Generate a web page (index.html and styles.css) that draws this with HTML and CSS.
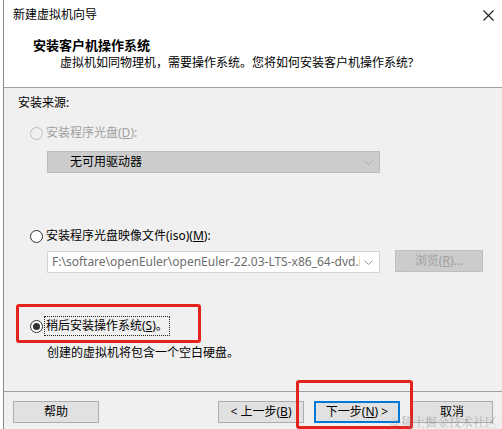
FILE: index.html
```html
<!DOCTYPE html>
<html lang="zh-CN">
<head>
<meta charset="utf-8">
<title>新建虚拟机向导</title>
<link rel="stylesheet" href="styles.css">
</head>
<body>
<div class="win">
  <div class="header">
    <div class="titlebar">
      <span class="title">新建虚拟机向导</span>
      <svg class="close" width="11" height="11" viewBox="0 0 11 11"><path d="M0.5 0.5 L10.5 10.5 M10.5 0.5 L0.5 10.5" stroke="#1a1a1a" stroke-width="1.1" fill="none"/></svg>
    </div>
    <div class="heading">安装客户机操作系统</div>
    <div class="sub">虚拟机如同物理机，需要操作系统。您将如何安装客户机操作系统?</div>
  </div>
  <div class="content">
    <div class="label">安装来源:</div>
    <div class="opt opt-disc disabled">
      <span class="radio"></span>
      <span class="opt-text">安装程序光盘(<u>D</u>):</span>
    </div>
    <div class="combo combo-disabled">
      <span class="combo-text">无可用驱动器</span>
      <svg class="chev" width="9" height="5" viewBox="0 0 9 5"><path d="M0.5 0.5 L4.5 4.5 L8.5 0.5" stroke="#a8a8a8" fill="none"/></svg>
    </div>
    <div class="opt opt-iso">
      <span class="radio"></span>
      <span class="opt-text">安装程序光盘映像文件(iso)(<u>M</u>):</span>
    </div>
    <div class="iso-row">
      <div class="combo combo-iso">
        <span class="combo-text">F:\softare\openEuler\openEuler-22.03-LTS-x86_64-dvd.iso</span>
        <svg class="chev" width="9" height="5" viewBox="0 0 9 5"><path d="M0.5 0.5 L4.5 4.5 L8.5 0.5" stroke="#9a9a9a" fill="none"/></svg>
      </div>
      <div class="btn btn-browse">浏览(<u>R</u>)...</div>
    </div>
    <div class="opt opt-later">
      <span class="radio checked"></span>
      <span class="opt-text focus">稍后安装操作系统(<u>S</u>)。</span>
    </div>
    <div class="note">创建的虚拟机将包含一个空白硬盘。</div>
  </div>
  <div class="footer">
    <div class="btn btn-help">帮助</div>
    <div class="spacer"></div>
    <div class="btn btn-back">&lt; 上一步(<u>B</u>)</div>
    <div class="btn btn-next">下一步(<u>N</u>) &gt;</div>
    <div class="btn btn-cancel">取消</div>
  </div>
  <div class="mark mark-later"></div>
  <div class="mark mark-next"></div>
  <div class="watermark">@稀土掘金技术社区</div>
</div>
</body>
</html>
```

FILE: styles.css
```css
* { box-sizing: border-box; }
html, body { margin: 0; padding: 0; }
body {
  background: #ffffff;
  width: 502px;
  height: 429px;
  overflow: hidden;
  font-family: "Noto Sans", "Noto Sans CJK SC", sans-serif;
  font-size: 12px;
  color: #000;
}
.win {
  position: relative;
  margin-left: 3px;
  width: 499px;
  height: 429px;
  border-left: 1px solid #8a8a8a;
  background: #f0f0f0;
  display: flex;
  flex-direction: column;
}
.header {
  background: #fff;
  height: 88px;
  border-bottom: 1px solid #a0a0a0;
}
.titlebar {
  height: 30px;
  display: flex;
  align-items: center;
  justify-content: space-between;
  padding: 0 8px 0 9px;
}
.title { line-height: 18px; }
.close { display: block; }
.heading {
  margin-top: 6px;
  padding-left: 29px;
  line-height: 18px;
  font-size: 13px;
  font-weight: 700;
}
.sub {
  padding-left: 56px;
  line-height: 18px;
}
.content {
  height: 303px;
  padding-top: 6px;
}
.label {
  padding-left: 14px;
  line-height: 18px;
}
.opt {
  display: flex;
  align-items: center;
  height: 18px;
  padding-left: 26px;
}
.opt-disc { margin-top: 12px; color: #a0a0a0; }
.opt-iso { margin-top: 54px; }
.opt-later { margin-top: 44px; }
.radio {
  width: 13px;
  height: 13px;
  border-radius: 50%;
  border: 1px solid #333;
  background: #fff;
  margin-right: 2px;
  display: flex;
  align-items: center;
  justify-content: center;
  flex: none;
}
.disabled .radio { border-color: #bcbcbc; background: #f0f0f0; }
.radio.checked::after {
  content: "";
  width: 7px;
  height: 7px;
  border-radius: 50%;
  background: #333;
}
.opt-text { line-height: 18px; padding: 0 1px; }
.focus { outline: 1px dotted #222; outline-offset: 0; }
.combo {
  height: 22px;
  display: flex;
  align-items: center;
  justify-content: space-between;
  border: 1px solid #bcbcbc;
  overflow: hidden;
}
.combo-disabled {
  margin: 9px 0 0 43px;
  width: 333px;
  background: #cccccc;
  padding: 0 6px 0 22px;
}
.combo-text { white-space: nowrap; overflow: hidden; line-height: 18px; }
.chev { flex: none; margin-left: 4px; }
.iso-row {
  display: flex;
  align-items: flex-start;
  margin: 5px 0 0 43px;
}
.combo-iso {
  margin-top: 1px;
  width: 333px;
  background: #fff;
  border-color: #d4d4d4;
  color: #6d6d6d;
  padding: 0 6px 0 4px;
}
.combo-iso .combo-text { font-family: "Noto Sans", sans-serif; font-size: 12px; flex: 1; }
.btn {
  height: 22px;
  display: flex;
  align-items: center;
  justify-content: center;
  background: #e1e1e1;
  border: 1px solid #adadad;
  line-height: 18px;
}
.btn-browse {
  margin-left: 15px;
  width: 88px;
  background: #cccccc;
  border-color: #bfbfbf;
  color: #a0a0a0;
}
.note {
  margin-top: 9px;
  padding-left: 43px;
  line-height: 18px;
}
.footer {
  border-top: 1px solid #a0a0a0;
  padding: 9px 9px 0 9px;
  display: flex;
  align-items: flex-start;
  flex: 1;
}
.spacer { flex: 1; }
.btn-help { width: 86px; }
.btn-back { width: 86px; }
.btn-next { width: 86px; margin-left: 10px; border: 2px solid #0078d7; }
.btn-cancel { width: 82px; margin-left: 11px; }
.mark {
  position: absolute;
  border: 3px solid #e5231d;
  border-radius: 3px;
}
.mark-later { left: 12px; top: 304px; width: 185px; height: 39px; }
.mark-next { left: 292px; top: 380px; width: 117px; height: 49px; }
.watermark {
  position: absolute;
  right: 5px;
  top: 415px;
  font-family: "Noto Serif CJK SC", "Liberation Serif", serif;
  font-size: 12px;
  line-height: 14px;
  color: rgba(140, 140, 140, 0.6);
  white-space: nowrap;
}
```
